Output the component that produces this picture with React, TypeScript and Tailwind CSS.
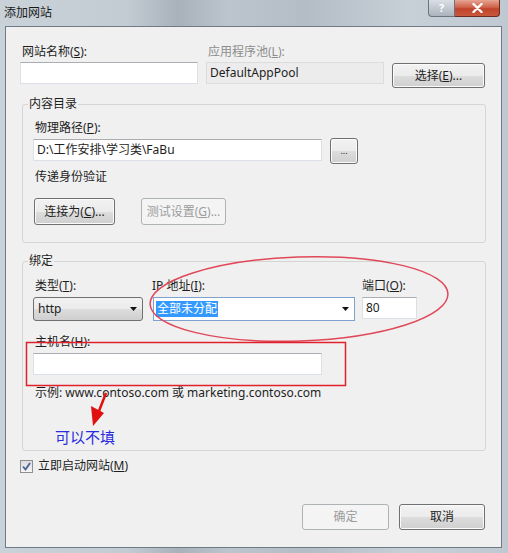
import React from 'react'

type Props = { className?: string; disabled?: boolean; children?: React.ReactNode }

function Button({ className = '', disabled, children }: Props) {
  return (
    <div
      className={`flex shrink-0 items-center justify-center rounded-[3px] border ${
        disabled
          ? 'border-[#adb2b5] bg-[#f4f4f4] text-[#9c9c9c]'
          : 'border-[#707070] bg-[linear-gradient(#f2f2f2_0%,#ebebeb_50%,#dddddd_51%,#cfcfcf_100%)] text-[#1e1e1e] shadow-[inset_0_0_0_1px_#fbfbfb]'
      } ${className}`}
    >
      {children}
    </div>
  )
}

function Field({ className = '', children }: Props) {
  return (
    <div className={`flex h-[22px] items-center border border-[#dbdfe6] border-t-[#abadb3] bg-white pl-[3px] ${className}`}>
      {children}
    </div>
  )
}

function Arrow({ className = '' }: Props) {
  return (
    <svg width="7" height="4" viewBox="0 0 7 4" className={className}>
      <path d="M0 0 H7 L3.5 4 Z" fill="#111" />
    </svg>
  )
}

export default function App() {
  return (
    <div className="relative h-[553px] w-[508px] overflow-hidden bg-[linear-gradient(90deg,#c9d1d9_0%,#c3cbd3_25%,#a9b2bb_35%,#bcc5ce_45%,#b4bdc6_60%,#c7cfd7_80%,#c0c9d2_100%)] font-['Noto_Sans','Noto_Sans_CJK_SC',sans-serif] text-[12px] leading-[16px] text-[#1e1e1e]">
      {/* title bar */}
      <div className="flex h-[26px] items-start">
        <div className="pl-[4px] pt-[5px] text-[#1a1a1a]">添加网站</div>
        <div className="ml-auto mr-[8px] flex">
          <div className="flex h-[17px] w-[27px] items-center justify-center rounded-bl-[4px] border border-t-0 border-[#6b7580] bg-[linear-gradient(#d9dfe5,#aab3bc)] text-[11px] font-bold text-white">
            ?
          </div>
          <div className="flex h-[17px] w-[45px] items-center justify-center rounded-br-[4px] border border-l-0 border-t-0 border-[#6e2a20] bg-[linear-gradient(#e5a593_0%,#d0634b_45%,#c0432b_55%,#c9593c_100%)]">
            <svg width="11" height="10" viewBox="0 0 11 10">
              <path d="M1.5 1 L9.5 9 M9.5 1 L1.5 9" stroke="#fff" strokeWidth="2.4" strokeLinecap="round" />
            </svg>
          </div>
        </div>
      </div>

      {/* dialog body */}
      <div className="ml-[5px] flex h-[522px] w-[497px] flex-col border border-[#6f7a85] bg-[#f0f0f0] pb-[17px] pl-[14px] pr-[16px] pt-[17px]">
        <div className="flex">
          <div className="w-[178px]">
            <div className="ml-[2px]">
              网站名称(<u>S</u>):
            </div>
            <Field className="mt-[2px]" />
          </div>
          <div className="ml-[8px] w-[178px]">
            <div className="ml-[2px] text-[#8d8d8d]">
              应用程序池(<u>L</u>):
            </div>
            <div className="mt-[2px] flex h-[22px] items-center border border-[#dcdcdc] bg-[#ececec] pl-[3px]">DefaultAppPool</div>
          </div>
          <Button className="ml-[8px] mt-[19px] h-[25px] w-[93px]">
            选择(<u>E</u>)...
          </Button>
        </div>

        <fieldset className="ml-[2px] mt-[8px] w-[464px] rounded-[3px] border border-[#d5d5d5] px-[10px] pb-[17px]">
          <legend className="-ml-[5px] px-[1px]">内容目录</legend>
          <div className="ml-[2px] mt-[8px]">
            物理路径(<u>P</u>):
          </div>
          <div className="mt-[3px] flex h-[22px] items-start">
            <Field className="w-[289px]">{'D:\\工作安排\\学习类\\FaBu'}</Field>
            <Button className="-mt-[1px] ml-[8px] h-[26px] w-[28px] text-[9px]">...</Button>
          </div>
          <div className="ml-[2px] mt-[8px]">传递身份验证</div>
          <div className="ml-[1px] mt-[13px] flex">
            <Button className="h-[27px] w-[81px]">
              连接为(<u>C</u>)...
            </Button>
            <Button disabled className="ml-[26px] h-[27px] w-[85px]">
              测试设置(<u>G</u>)...
            </Button>
          </div>
        </fieldset>

        <fieldset className="ml-[2px] mt-[10px] w-[464px] rounded-[3px] border border-[#d5d5d5] px-[10px] pb-[3px]">
          <legend className="-ml-[5px] px-[1px]">绑定</legend>
          <div className="mt-[9px] flex">
            <div className="w-[110px]">
              <div className="ml-[2px]">
                类型(<u>T</u>):
              </div>
              <div className="mt-[3px] flex h-[24px] items-center rounded-[3px] border border-[#707070] bg-[linear-gradient(#f2f2f2_0%,#ebebeb_50%,#dddddd_51%,#cfcfcf_100%)] pl-[4px] pr-[5px]">
                http
                <Arrow className="ml-auto" />
              </div>
            </div>
            <div className="ml-[10px] w-[202px]">
              <div className="-ml-[1px]">
                IP 地址(<u>I</u>):
              </div>
              <div className="mt-[3px] flex h-[24px] items-center border border-[#7da2ce] bg-white pl-[2px] pr-[5px]">
                <span className="bg-[#3399ff] px-[1px] text-white">全部未分配</span>
                <Arrow className="ml-auto" />
              </div>
            </div>
            <div className="ml-[7px] w-[55px]">
              <div>
                端口(<u>O</u>):
              </div>
              <Field className="mt-[3px]">80</Field>
            </div>
          </div>
          <div className="ml-[2px] mt-[13px]">
            主机名(<u>H</u>):
          </div>
          <Field className="mt-[3px] w-[289px]" />
          <div className="ml-[2px] mt-[10px]">示例: www.contoso.com 或 marketing.contoso.com</div>
          <div className="ml-[22px] mt-[26px] text-[15px] leading-[20px] text-[#2a2ae0]">可以不填</div>
        </fieldset>

        <div className="mt-[7px] flex items-center">
          <div className="flex h-[13px] w-[13px] items-center justify-center border border-[#8e8f8f] bg-[linear-gradient(#dcdcdc,#f6f6f6)]">
            <svg width="9" height="9" viewBox="0 0 9 9">
              <path d="M1 4.5 L3.5 7.5 L8 1" fill="none" stroke="#4a5f97" strokeWidth="1.8" />
            </svg>
          </div>
          <span className="ml-[5px]">
            立即启动网站(<u>M</u>)
          </span>
        </div>

        <div className="mt-auto flex justify-end">
          <Button disabled className="h-[26px] w-[87px]">
            确定
          </Button>
          <Button className="ml-[10px] h-[26px] w-[86px]">取消</Button>
        </div>
      </div>

      {/* red annotations */}
      <svg className="pointer-events-none absolute left-0 top-0" width="508" height="553">
        <ellipse cx="299" cy="299" rx="149" ry="42" transform="rotate(-2 299 299)" fill="none" stroke="#e0485a" strokeWidth="1.5" />
        <rect x="26.5" y="342.5" width="319" height="43" fill="none" stroke="#e0202a" strokeWidth="1.5" />
        <path d="M106 393 L99 411" stroke="#e01010" strokeWidth="2.5" />
        <path d="M91 406 L104 413 L93 426 Z" fill="#e01010" />
      </svg>
    </div>
  )
}
